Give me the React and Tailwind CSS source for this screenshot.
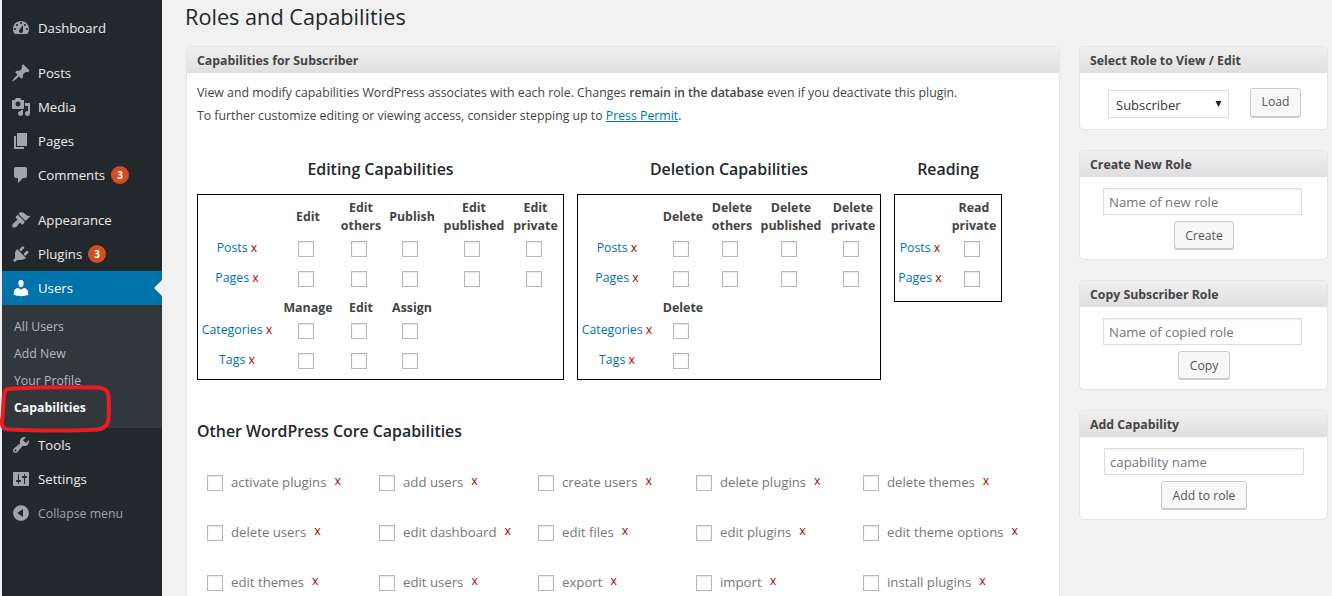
const icons = {
  dashboard: "M3.76 16h12.48c1.1-1.37 1.76-3.11 1.76-5 0-4.42-3.58-8-8-8s-8 3.58-8 8c0 1.89.66 3.63 1.76 5zM10 4c.55 0 1 .45 1 1s-.45 1-1 1-1-.45-1-1 .45-1 1-1zM6 6c.55 0 1 .45 1 1s-.45 1-1 1-1-.45-1-1 .45-1 1-1zm8 0c.55 0 1 .45 1 1s-.45 1-1 1-1-.45-1-1 .45-1 1-1zm-5.37 5.55L12 7v6c0 1.1-.9 2-2 2s-2-.9-2-2c0-.57.24-1.08.63-1.45zM4 10c.55 0 1 .45 1 1s-.45 1-1 1-1-.45-1-1 .45-1 1-1zm12 0c.55 0 1 .45 1 1s-.45 1-1 1-1-.45-1-1 .45-1 1-1z",
  posts: "M10.44 3.02l1.82-1.82 6.36 6.35-1.83 1.82c-1.05-.68-2.48-.57-3.41.36l-.75.75c-.92.93-1.04 2.35-.35 3.41l-1.83 1.82-2.41-2.41-2.8 2.79c-.42.42-3.38 2.71-3.8 2.29s1.86-3.39 2.28-3.81l2.79-2.79L4.1 9.36l1.83-1.82c1.05.69 2.48.57 3.4-.36l.75-.75c.93-.92 1.05-2.35.36-3.41z",
  media: "M13 11V4c0-.55-.45-1-1-1h-1.67L9 1H5L3.67 3H2c-.55 0-1 .45-1 1v7c0 .55.45 1 1 1h10c.55 0 1-.45 1-1zM7 4.5c1.38 0 2.5 1.12 2.5 2.5S8.38 9.5 7 9.5 4.5 8.38 4.5 7 5.62 4.5 7 4.5zM14 6h5v10.5c0 1.38-1.12 2.5-2.5 2.5S14 17.88 14 16.5s1.12-2.5 2.5-2.5c.17 0 .34.02.5.05V9h-3V6zm-4 8.05V13h2v3.5c0 1.38-1.12 2.5-2.5 2.5S7 17.88 7 16.5 8.12 14 9.5 14c.17 0 .34.02.5.05z",
  pages: "M6 15V2h10v13H6zm-1 1h8v2H3V5h2v11z",
  comments: "M5 2h9c1.1 0 2 .9 2 2v7c0 1.1-.9 2-2 2h-2l-5 5v-5H5c-1.1 0-2-.9-2-2V4c0-1.1.9-2 2-2z",
  appearance: "M14.48 11.06L7.41 3.99l1.5-1.5c.5-.56 2.3-.47 3.51.32 1.21.8 1.43 1.28 2.91 2.1 1.18.64 2.45 1.26 4.45.85zm-.71.71L6.7 4.7 4.93 6.47c-.39.39-.39 1.02 0 1.41l1.06 1.06c.39.39.39 1.03 0 1.42-.6.6-1.43 1.11-2.21 1.69-.35.26-.7.53-1.01.84C1.43 13.71.96 15.12 1.39 17.3c2.18.43 3.59-.04 4.4-.85.31-.31.58-.66.84-1.01.58-.78 1.09-1.61 1.69-2.21.39-.39 1.03-.39 1.42 0l1.06 1.06c.39.39 1.02.39 1.41 0z",
  plugins: "M13.11 4.36L9.87 7.6 8 5.73l3.24-3.24c.35-.34 1.05-.2 1.56.32.52.51.66 1.21.31 1.55zm-8 1.77l.91-1.12 9.01 9.01-1.19.84c-.71.71-2.63 1.16-3.82 1.16H6.14L4.9 17.26c-.59.59-1.54.59-2.12 0-.59-.58-.59-1.53 0-2.12l1.24-1.24v-3.88c0-1.13.4-3.19 1.09-3.89zm7.26 3.97l3.24-3.24c.34-.35 1.04-.21 1.55.31.52.51.66 1.21.31 1.55l-3.24 3.25z",
  users: "M10 9.25c-2.27 0-2.73-3.44-2.73-3.44C7 4.02 7.82 2 9.97 2c2.16 0 2.98 2.02 2.71 3.81 0 0-.41 3.44-2.68 3.44zm0 2.57L12.72 10c2.39 0 4.52 2.33 4.52 4.53v2.49s-3.65 1.13-7.24 1.13c-3.65 0-7.24-1.13-7.24-1.13v-2.49c0-2.25 1.94-4.48 4.47-4.48z",
  tools: "M16.68 9.77c-1.34 1.34-3.3 1.67-4.95.99l-5.41 6.52c-.99.99-2.59.99-3.58 0s-.99-2.59 0-3.57l6.52-5.42c-.68-1.65-.35-3.61.99-4.95 1.28-1.28 3.12-1.62 4.72-1.06l-2.89 2.89 2.82 2.82 2.86-2.87c.53 1.58.18 3.39-1.08 4.65zM3.81 16.21c.4.39 1.04.39 1.43 0 .4-.4.4-1.04 0-1.43-.39-.4-1.03-.4-1.43 0-.39.39-.39 1.03 0 1.43z",
  settings: "M18 16V4c0-.55-.45-1-1-1H3c-.55 0-1 .45-1 1v12c0 .55.45 1 1 1h14c.55 0 1-.45 1-1zM8 11h1c.55 0 1 .45 1 1s-.45 1-1 1H8v1.5c0 .28-.22.5-.5.5s-.5-.22-.5-.5V13H6c-.55 0-1-.45-1-1s.45-1 1-1h1V5.5c0-.28.22-.5.5-.5s.5.22.5.5V11zm5-2h-1c-.55 0-1-.45-1-1s.45-1 1-1h1V5.5c0-.28.22-.5.5-.5s.5.22.5.5V7h1c.55 0 1 .45 1 1s-.45 1-1 1h-1v5.5c0 .28-.22.5-.5.5s-.5-.22-.5-.5V9z",
  collapse: "M10 2.16c4.33 0 7.84 3.51 7.84 7.84s-3.51 7.84-7.84 7.84S2.16 14.33 2.16 10 5.71 2.16 10 2.16zm2 11.72V6.12L6.18 9.97z",
};

function MenuIcon({ name, className = "text-[#a0a5aa]" }) {
  return (
    <svg viewBox="0 0 20 20" className={`h-5 w-5 shrink-0 fill-current ${className}`}>
      <path d={icons[name]} />
    </svg>
  );
}

function MenuItem({ icon, label, badge }) {
  return (
    <a href="#" className="flex h-[34px] items-center pl-[9px] text-[13.2px] text-[#eee]">
      <MenuIcon name={icon} />
      <span className="ml-[7px] pt-[2px]">{label}</span>
      {badge && (
        <span className="ml-[6px] flex h-[18px] w-[18px] items-center justify-center rounded-full bg-[#d54e21] text-[10px] font-bold text-white">
          {badge}
        </span>
      )}
    </a>
  );
}

function Sidebar() {
  return (
    <aside className="relative ml-[2px] h-full w-[160px] shrink-0 bg-[#23282d] pt-[11px]">
      <MenuItem icon="dashboard" label="Dashboard" />
      <div className="h-[11px]" />
      <MenuItem icon="posts" label="Posts" />
      <MenuItem icon="media" label="Media" />
      <MenuItem icon="pages" label="Pages" />
      <MenuItem icon="comments" label="Comments" badge="3" />
      <div className="h-[11px]" />
      <MenuItem icon="appearance" label="Appearance" />
      <MenuItem icon="plugins" label="Plugins" badge="3" />

      <a href="#" className="relative flex h-[34px] items-center bg-[#0073aa] pl-[9px] text-[13.2px] text-white">
        <MenuIcon name="users" className="text-white" />
        <span className="ml-[7px] pt-[2px]">Users</span>
        <span className="absolute right-0 top-[9px] h-0 w-0 border-y-[8px] border-r-[8px] border-y-transparent border-r-[#f1f1f1]" />
      </a>
      <div className="flex h-[123px] flex-col bg-[#32373c] pb-[6px] pt-[9px] pl-[12px] text-[12.3px] text-[#b4b9be]">
        <a href="#" className="flex h-[27px] items-center">All Users</a>
        <a href="#" className="flex h-[27px] items-center">Add New</a>
        <a href="#" className="flex h-[27px] items-center">Your Profile</a>
        <a href="#" className="flex h-[27px] items-center font-bold text-white">Capabilities</a>
      </div>

      <MenuItem icon="tools" label="Tools" />
      <MenuItem icon="settings" label="Settings" />
      <a href="#" className="flex h-[34px] items-center pl-[9px] text-[12.3px] text-[#a0a5aa]">
        <MenuIcon name="collapse" />
        <span className="ml-[7px] pt-[2px]">Collapse menu</span>
      </a>

      {/* red marker drawn over the screenshot */}
      <svg viewBox="0 0 112 48" className="absolute left-[-2px] top-[385px] h-[48px] w-[112px] fill-none stroke-[#ed1c24]">
        <path strokeWidth="4" d="M7 4C30 2 70 2 98 2.500c7 .5 10 3 10.500 9 .5 7 .5 15 0 22-.5 7-4 10-11 11C70 46 35 45.500 9 44.500 3 44 1.500 41 2 36c.5-4 1-10 1.500-20C3.800 10 4 6 7 4z" />
      </svg>
    </aside>
  );
}

function Check() {
  return (
    <div className="flex justify-center pr-[4px]">
      <input
        type="checkbox"
        className="h-4 w-4 appearance-none border border-[#b4b9be] bg-white shadow-[inset_0_1px_2px_rgba(0,0,0,0.1)]"
      />
    </div>
  );
}

function RowLabel({ label }) {
  return (
    <td className="pb-[2px] pr-[2px] text-center text-[12.3px]">
      <a href="#" className="text-[#0073aa]">{label}</a> <span className="text-[#a00]">x</span>
    </td>
  );
}

function CapRow({ label, cols }) {
  return (
    <tr className="h-[30px]">
      <RowLabel label={label} />
      {cols.map((c, i) => (
        <td key={i}>{c ? <Check /> : null}</td>
      ))}
    </tr>
  );
}

function HeadCell({ children }) {
  return (
    <th className="p-0 pt-[3px] text-center align-middle text-[12.4px] font-bold leading-[18px] text-[#444]">
      <div className="translate-y-px">{children}</div>
    </th>
  );
}

function CapTable({ widths, className, tableWidth, labelWidth = "w-[80px]", heads, children }) {
  return (
    <div className={`border border-black bg-white ${className}`}>
      <table className={`table-fixed border-collapse ${tableWidth}`}>
        <colgroup>
          <col className={labelWidth} />
          {widths.map((w, i) => (
            <col key={i} className={w} />
          ))}
        </colgroup>
        <tbody>
          <tr className="h-[39px]">
            <th className="p-0" />
            {heads.map((h, i) => (
              <HeadCell key={i}>
                {h.map((line) => (
                  <div key={line}>{line}</div>
                ))}
              </HeadCell>
            ))}
          </tr>
          {children}
        </tbody>
      </table>
    </div>
  );
}

function Section({ title, children }) {
  return (
    <div className="flex flex-col items-center">
      <h3 className="mb-[14px] text-center text-[15.9px] font-semibold leading-[22px] text-[#23282d]">{title}</h3>
      {children}
    </div>
  );
}

const otherCaps = [
  ["activate plugins", "add users", "create users", "delete plugins", "delete themes"],
  ["delete users", "edit dashboard", "edit files", "edit plugins", "edit theme options"],
  ["edit themes", "edit users", "export", "import", "install plugins"],
];

function OtherCap({ label }) {
  return (
    <label className="flex h-[50px] items-center">
      <input
        type="checkbox"
        className="h-4 w-4 shrink-0 appearance-none border border-[#b4b9be] bg-white shadow-[inset_0_1px_2px_rgba(0,0,0,0.1)]"
      />
      <span className="ml-2 whitespace-nowrap text-[13.2px] text-[#777]">{label}</span>
      <span className="mb-[3px] ml-2 text-[12.3px] text-[#a00]">x</span>
    </label>
  );
}

function Box({ title, children, className = "" }) {
  return (
    <section className={`overflow-hidden rounded-[5px] border border-[#e5e5e5] bg-white ${className}`}>
      <h2 className="flex h-[26px] items-center bg-gradient-to-b from-[#f0f0f0] to-[#dfdfdf] pl-[10px] pt-[2px] text-[12.3px] font-bold text-[#444]">
        {title}
      </h2>
      {children}
    </section>
  );
}

function Btn({ children, className = "" }) {
  return (
    <button
      type="button"
      className={`rounded-[3px] border border-[#ccc] bg-[#f7f7f7] text-[12.2px] text-[#555] shadow-[0_1px_0_#ccc] ${className}`}
    >
      {children}
    </button>
  );
}

function NameBox({ title, placeholder, button, btnWidth, inputClass = "w-[199px] ml-[23px]" }) {
  return (
    <Box title={title} className="h-[110px]">
      <div className="flex flex-col pt-[11px]">
        <input
          placeholder={placeholder}
          className={`h-[27px] border border-[#ddd] bg-white pl-[5px] text-[13.2px] shadow-[inset_0_1px_2px_rgba(0,0,0,0.07)] outline-none placeholder:text-[#72777c] ${inputClass}`}
        />
        <div className="mt-[6px] flex justify-center pl-[1px]">
          <Btn className={`h-[28px] pt-[2px] ${btnWidth}`}>{button}</Btn>
        </div>
      </div>
    </Box>
  );
}

export default function App() {
  return (
    <div className="flex h-[596px] w-[1332px] overflow-hidden bg-[#f1f1f1] font-['Open_Sans',sans-serif] text-[12.3px] text-[#444]">
      <Sidebar />

      <main className="min-w-0 flex-1 pl-[23px]">
        <h1 className="h-[46px] pt-[2px] text-[21.7px] leading-[30px] text-[#23282d]">Roles and Capabilities</h1>

        <div className="flex items-start">
          <section className="ml-[1px] h-[600px] w-[874px] shrink-0 overflow-hidden rounded-t-[5px] border border-[#e5e5e5] bg-white">
            <h2 className="flex h-[26px] items-center bg-gradient-to-b from-[#f0f0f0] to-[#dfdfdf] pl-[10px] pt-[2px] text-[12.3px] font-bold text-[#444]">
              Capabilities for Subscriber
            </h2>
            <div className="px-[10px]">
              <p className="mt-[8px] leading-[23px]">
                View and modify capabilities WordPress associates with each role. Changes <strong className="text-[12px] font-semibold">remain in the database</strong> even if you deactivate this plugin.
              </p>
              <p className="leading-[23px]">
                To further customize editing or viewing access, consider stepping up to <a href="#" className="text-[#0073aa] underline">Press Permit</a>.
              </p>

              <div className="mt-[31px] flex items-start gap-[13px]">
                <Section title="Editing Capabilities">
                  <CapTable
                    className="h-[186px] w-[367px]"
                    tableWidth="w-[365px]"
                    widths={["w-[60px]", "w-[46px]", "w-[56px]", "w-[68px]", "w-[55px]"]}
                    heads={[["Edit"], ["Edit", "others"], ["Publish"], ["Edit", "published"], ["Edit", "private"]]}
                  >
                    <CapRow label="Posts" cols={[1, 1, 1, 1, 1]} />
                    <CapRow label="Pages" cols={[1, 1, 1, 1, 1]} />
                    <tr className="h-[22px]">
                      <th className="p-0" />
                      <HeadCell>Manage</HeadCell>
                      <HeadCell>Edit</HeadCell>
                      <HeadCell>Assign</HeadCell>
                      <th className="p-0" />
                      <th className="p-0" />
                    </tr>
                    <CapRow label="Categories" cols={[1, 1, 1, 0, 0]} />
                    <CapRow label="Tags" cols={[1, 1, 1, 0, 0]} />
                  </CapTable>
                </Section>

                <Section title="Deletion Capabilities">
                  <CapTable
                    className="h-[186px] w-[304px]"
                    tableWidth="w-[302px]"
                    widths={["w-[50px]", "w-[48px]", "w-[70px]", "w-[54px]"]}
                    heads={[["Delete"], ["Delete", "others"], ["Delete", "published"], ["Delete", "private"]]}
                  >
                    <CapRow label="Posts" cols={[1, 1, 1, 1]} />
                    <CapRow label="Pages" cols={[1, 1, 1, 1]} />
                    <tr className="h-[22px]">
                      <th className="p-0" />
                      <HeadCell>Delete</HeadCell>
                      <th className="p-0" />
                      <th className="p-0" />
                      <th className="p-0" />
                    </tr>
                    <CapRow label="Categories" cols={[1, 0, 0, 0]} />
                    <CapRow label="Tags" cols={[1, 0, 0, 0]} />
                  </CapTable>
                </Section>

                <Section title="Reading">
                  <CapTable
                    className="h-[108px] w-[108px]"
                    tableWidth="w-[106px]"
                    labelWidth="w-[52px]"
                    widths={["w-[54px]"]}
                    heads={[["Read", "private"]]}
                  >
                    <CapRow label="Posts" cols={[1]} />
                    <CapRow label="Pages" cols={[1]} />
                  </CapTable>
                </Section>
              </div>

              <h3 className="mt-[40px] text-[15.9px] font-semibold leading-[22px] text-[#23282d]">Other WordPress Core Capabilities</h3>
              <div className="mt-[16px] grid grid-cols-[172px_159px_158px_167px_1fr] pl-[10px]">
                {otherCaps.flat().map((c) => (
                  <OtherCap key={c} label={c} />
                ))}
              </div>
            </div>
          </section>

          <div className="ml-[19px] flex w-[249px] shrink-0 flex-col gap-[20px]">
            <Box title="Select Role to View / Edit" className="h-[84px]">
              <div className="flex items-start pl-[28px] pt-[15px]">
                <div className="relative mt-[2px]">
                  <select className="h-[28px] w-[121px] appearance-none border border-[#ddd] bg-white pl-[7px] pt-[4px] text-[13px] text-[#32373c] outline-none">
                    <option>Subscriber</option>
                  </select>
                  <svg viewBox="0 0 8 8" className="absolute right-[7px] top-[11px] h-[6px] w-[7px] fill-[#222]">
                    <path d="M0 0h8L4 8z" />
                  </svg>
                </div>
                <Btn className="ml-[21px] h-[29px] w-[51px]">Load</Btn>
              </div>
            </Box>
            <NameBox title="Create New Role" placeholder="Name of new role" button="Create" btnWidth="w-[60px]" />
            <NameBox title="Copy Subscriber Role" placeholder="Name of copied role" button="Copy" btnWidth="w-[52px]" />
            <NameBox title="Add Capability" placeholder="capability name" button="Add to role" btnWidth="w-[86px]" inputClass="w-[200px] ml-[24px]" />
          </div>
        </div>
      </main>
    </div>
  );
}
